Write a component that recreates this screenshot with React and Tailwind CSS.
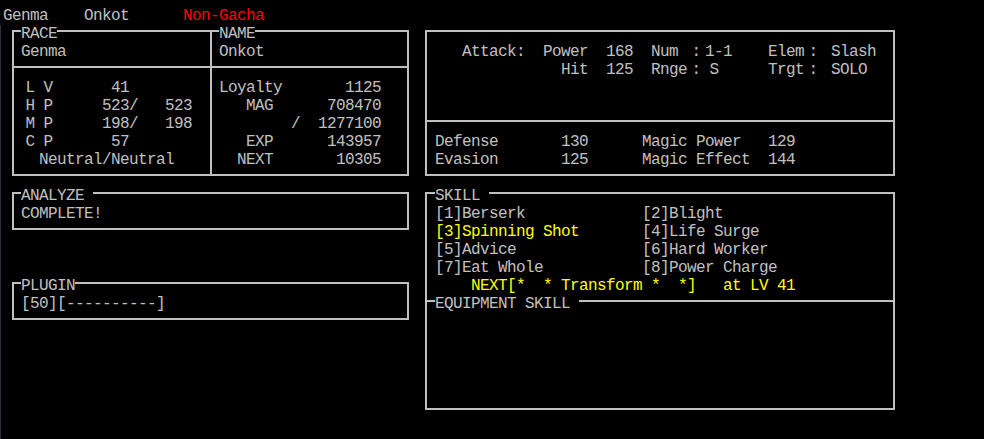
import React from 'react'

// one full-width cell (two columns), like the ＬＶ / ：glyphs of the console font
function W({ children }) {
  return <span className="inline-block w-[18px] text-center">{children}</span>
}

function Row({ children, className = '' }) {
  return <div className={`h-[18px] whitespace-pre ${className}`}>{children}</div>
}

function Label({ children, left = 'left-[7px]' }) {
  return (
    <span className={`absolute -top-[7px] ${left} h-[18px] whitespace-pre bg-black`}>
      {children}
    </span>
  )
}

const line = 'border-[#c0c0c0]'

function StatusBox() {
  return (
    <div className={`border-2 ${line} w-[397px]`}>
      <div className={`flex border-b-2 ${line}`}>
        <div className="relative w-[196px] h-[34px] pl-[7px] pt-[11px]">
          <Label>RACE</Label>
          <Row>Genma</Row>
        </div>
        <div className={`relative flex-1 h-[34px] border-l-2 ${line} pl-[7px] pt-[11px]`}>
          <Label>NAME</Label>
          <Row>Onkot</Row>
        </div>
      </div>
      <div className="flex">
        <div className="w-[196px] h-[106px] pl-[7px] pt-[11px]">
          <Row><W>L</W><W>V</W>{'      41'}</Row>
          <Row><W>H</W><W>P</W>{'     523/   523'}</Row>
          <Row><W>M</W><W>P</W>{'     198/   198'}</Row>
          <Row><W>C</W><W>P</W>{'      57'}</Row>
          <Row>{'  Neutral/Neutral'}</Row>
        </div>
        <div className={`flex-1 h-[106px] border-l-2 ${line} pl-[7px] pt-[11px]`}>
          <Row>{'Loyalty       1125'}</Row>
          <Row>{'   MAG      708470'}</Row>
          <Row>{'        /  1277100'}</Row>
          <Row>{'   EXP      143957'}</Row>
          <Row>{'  NEXT       10305'}</Row>
        </div>
      </div>
    </div>
  )
}

function SmallBox({ label, text, className = '' }) {
  return (
    <div className={`relative border-2 ${line} w-[397px] h-[38px] pl-[7px] pt-[11px] ${className}`}>
      <Label>{label}</Label>
      <Row>{text}</Row>
    </div>
  )
}

function AttackBox() {
  return (
    <div className={`border-2 ${line} w-[470px]`}>
      <div className={`h-[90px] border-b-2 ${line} pl-[8px] pt-[11px]`}>
        <Row>
          {'   Attack:  Power  168  Num '}<W>:</W>{'1-1    Elem'}<W>:</W>{' Slash'}
        </Row>
        <Row>
          {'              Hit  125  Rnge'}<W>:</W><W>S</W>{'     Trgt'}<W>:</W>{' SOLO'}
        </Row>
      </div>
      <div className="h-[52px] pl-[8px] pt-[11px]">
        <Row>{'Defense       130      Magic Power   129'}</Row>
        <Row>{'Evasion       125      Magic Effect  144'}</Row>
      </div>
    </div>
  )
}

function SkillBox() {
  return (
    <div className={`border-2 ${line} w-[470px] mt-[16px]`}>
      <div className={`relative h-[108px] border-b-2 ${line} pl-[8px] pt-[11px]`}>
        <Label left="left-[8px]">SKILL </Label>
        <Row>{'[1]Berserk             [2]Blight'}</Row>
        <Row>
          <span className="text-[#ffff00]">[3]Spinning Shot</span>
          {'       [4]Life Surge'}
        </Row>
        <Row>{'[5]Advice              [6]Hard Worker'}</Row>
        <Row>{'[7]Eat Whole           [8]Power Charge'}</Row>
        <Row className="text-[#ffff00]">{'    NEXT[*  * Transform *  *]   at LV 41'}</Row>
      </div>
      <div className="relative h-[106px]">
        <Label left="left-[8px]">EQUIPMENT SKILL </Label>
      </div>
    </div>
  )
}

export default function App() {
  return (
    <div className="w-[984px] h-[439px] overflow-hidden bg-black text-[#c0c0c0] font-['Liberation_Mono',monospace] text-[16px] leading-[18px] tracking-[-0.6px]">
      <div className="h-[25px] pl-[3px] pt-[7px]">
        <Row>
          {'Genma    Onkot      '}
          <span className="text-[#ff0000]">Non-Gacha</span>
        </Row>
      </div>
      <div className="flex h-[414px] border-l border-[#2b303a] pt-[5px]">
        <div className="ml-[11px] flex flex-col">
          <StatusBox />
          <SmallBox label="ANALYZE " text="COMPLETE!" className="mt-[16px]" />
          <SmallBox label="PLUGIN" text="[50][----------]" className="mt-[52px]" />
        </div>
        <div className="ml-[16px] flex flex-col">
          <AttackBox />
          <SkillBox />
        </div>
      </div>
    </div>
  )
}
